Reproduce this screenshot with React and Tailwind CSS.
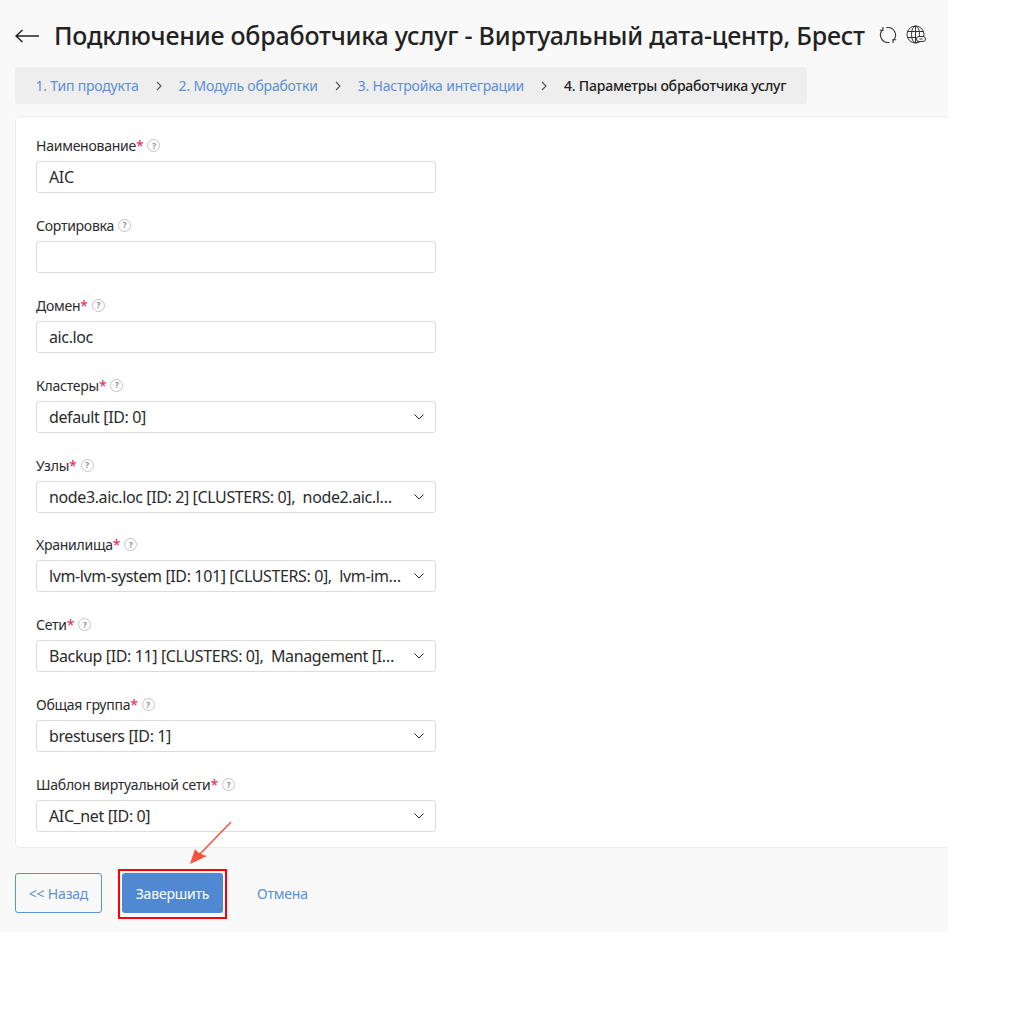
import React from "react";

const fields = [
  { label: "Наименование", req: true, value: "AIC" },
  { label: "Сортировка", value: "" },
  { label: "Домен", req: true, value: "aic.loc" },
  { label: "Кластеры", req: true, value: "default [ID: 0]", select: true },
  { label: "Узлы", req: true, value: "node3.aic.loc [ID: 2] [CLUSTERS: 0],  node2.aic.l…", select: true },
  { label: "Хранилища", req: true, value: "lvm-lvm-system [ID: 101] [CLUSTERS: 0],  lvm-im…", select: true },
  { label: "Сети", req: true, value: "Backup [ID: 11] [CLUSTERS: 0],  Management [I…", select: true },
  { label: "Общая группа", req: true, value: "brestusers [ID: 1]", select: true },
  { label: "Шаблон виртуальной сети", req: true, value: "AIC_net [ID: 0]", select: true },
];

function Help() {
  return (
    <span className="ml-[4px] w-[13px] h-[13px] rounded-full border border-[#c4c4c4] text-[8px] leading-none text-[#8a8a8a] flex items-center justify-center font-bold">
      ?
    </span>
  );
}

function Field({ label, req, value, select }) {
  return (
    <div className="h-[79.875px] w-[400px]">
      <div className="h-[28px] flex items-center text-[14px] tracking-[-0.25px] text-[#2b2b2b] pb-[3px]">
        <span>{label}</span>
        {req && <span className="text-[#e0245e]">*</span>}
        <Help />
      </div>
      <div className="h-[32px] bg-white border border-[#dcdcdc] rounded-[3px] flex items-center pl-[12px] pr-[9px]">
        <span className="flex-1 min-w-0 whitespace-pre text-[16px] tracking-[-0.38px] text-[#2b2b2b]">{value}</span>
        {select && (
          <svg width="14" height="8" viewBox="0 0 14 8" fill="none" stroke="#222" strokeWidth="1" className="shrink-0">
            <path d="M2.5 1.5 7 6l4.5-4.5" />
          </svg>
        )}
      </div>
    </div>
  );
}

function Crumb({ children }) {
  return (
    <>
      <span className="text-[14px] tracking-[-0.2px] text-[#5b8fd6]">{children}</span>
      <svg width="6" height="10" viewBox="0 0 6 10" fill="none" stroke="#555" strokeWidth="1.1" className="mx-[17px] shrink-0">
        <path d="M1 1l4 4-4 4" />
      </svg>
    </>
  );
}

export default function App() {
  return (
    <div className="w-[1024px] h-[1024px] bg-white font-['Noto_Sans','Liberation_Sans',sans-serif]">
      <div className="w-[948px] h-[932px] bg-[#f9f9f9] pl-[15px] flex flex-col">
        <div className="h-[67px] flex items-center pt-[4px]">
          <svg width="24" height="14" viewBox="0 0 24 14" fill="none" stroke="#222" strokeWidth="1.5" className="shrink-0">
            <path d="M24 7H1M7.5 1 1 7l6.5 6" />
          </svg>
          <h1 className="ml-[15px] text-[25px] tracking-[-0.2px] font-medium text-[#222] whitespace-nowrap">
            Подключение обработчика услуг - Виртуальный дата-центр, Брест
          </h1>
          <svg width="18" height="18" viewBox="0 0 18 18" fill="none" stroke="#333" strokeWidth="1.1" className="ml-[14px] -mt-[2px] shrink-0">
            <path d="M10.5 16.35A7.5 7.5 0 0 1 3.7 3.7M7.5 1.65A7.5 7.5 0 0 1 14.3 14.3" />
            <path d="M0.8 4.2H4V1M17.2 13.8H14V17" />
          </svg>
          <svg width="20" height="20" viewBox="0 0 20 20" fill="none" stroke="#333" strokeWidth="1" className="ml-[9px] -mt-[2px] shrink-0">
            <circle cx="9.5" cy="9.5" r="8.5" />
            <ellipse cx="9.5" cy="9.5" rx="4" ry="8.5" />
            <path d="M1.5 6.5h16M1.5 12.5h9M9.5 1v17" />
            <rect x="10.5" y="11.5" width="9" height="5" rx="2.5" fill="#f9f9f9" />
            <path d="M13.5 14h3" />
          </svg>
        </div>

        <div className="w-[792px] h-[37px] bg-[#eeeeee] rounded-[3px] flex items-center pl-[20.5px] whitespace-nowrap">
          <Crumb>1. Тип продукта</Crumb>
          <Crumb>2. Модуль обработки</Crumb>
          <Crumb>3. Настройка интеграции</Crumb>
          <span className="text-[14px] tracking-[-0.2px] font-medium text-[#222]">4. Параметры обработчика услуг</span>
        </div>

        <div className="mt-[12px] h-[732px] bg-white border border-[#ececec] border-r-0 rounded-l-[5px] pl-[20px] pt-[16px]">
          {fields.map((f) => (
            <Field key={f.label} {...f} />
          ))}
        </div>

        <div className="mt-[25px] flex items-center text-[14px] tracking-[-0.2px]">
          <button className="w-[87px] h-[40px] border border-[#5b8fd6] rounded-[3px] text-[#5b8fd6]">&lt;&lt; Назад</button>
          <div className="relative ml-[20px]">
            <button className="w-[101px] h-[40px] bg-[#5089d1] rounded-[3px] text-white block">Завершить</button>
            <span className="absolute -left-[4px] -top-[4px] w-[109px] h-[50px] border-2 border-[#ff0000]" />
            <svg width="46" height="46" viewBox="0 0 46 46" className="absolute left-[67px] -top-[53px]" fill="none">
              <path d="M42 2 10 35" stroke="#f4533c" strokeWidth="1.5" />
              <path d="M1 44 L6 29 Q9 33 11 33 Q13 35 18 36Z" fill="#f4533c" />
            </svg>
          </div>
          <span className="ml-[34px] text-[#5b8fd6]">Отмена</span>
        </div>
      </div>
    </div>
  );
}
